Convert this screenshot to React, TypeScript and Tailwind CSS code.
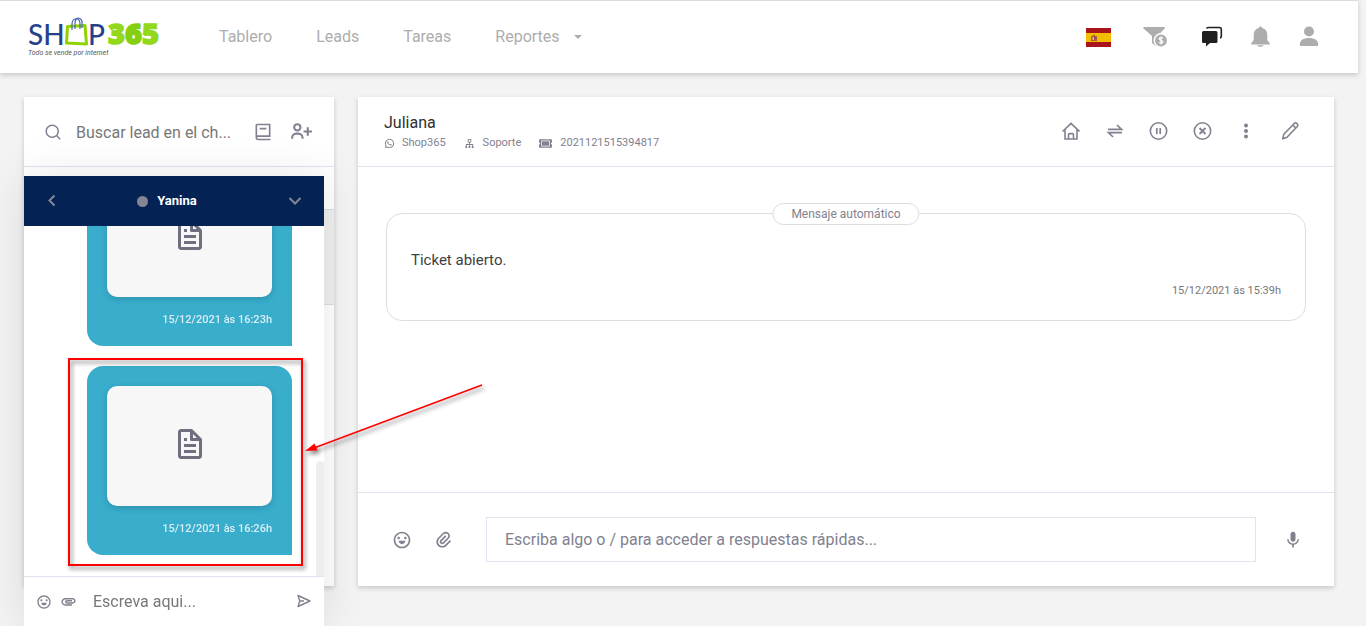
import { BiFile, BiSitemap, BiUserPlus } from "react-icons/bi";
import { FaTicketAlt } from "react-icons/fa";
import { MdAttachment, MdMic } from "react-icons/md";
import {
  RiAttachment2,
  RiBook2Line,
  RiEmotionLine,
  RiSearchLine,
  RiWhatsappLine,
} from "react-icons/ri";

const navLinks = ["Tablero", "Leads", "Tareas"];

const files = ["15/12/2021 às 16:23h", "15/12/2021 às 16:26h"];

function Logo() {
  return (
    <svg className="overflow-visible" width="134" height="42" viewBox="0 0 134 42" role="img" aria-label="Shop 365">
      <g fill="#27408b" fontFamily="Lato, sans-serif" fontWeight="500" fontSize="28">
        <text x="0" y="29">SH</text>
        <text x="60" y="29">P</text>
      </g>
      <path d="M39.500 10.500L57 9.500L58.500 28L38.500 27Z" fill="#fff" stroke="#8fd400" strokeWidth="3" strokeLinejoin="round" />
      <path d="M44 14V8C44 1 52 1 52 8V13M47 13V7C47 0 55 1 54 8V12" fill="none" stroke="#4a69b0" strokeWidth="1.200" />
      <text x="80" y="28" fill="#93d81c" stroke="#93d81c" strokeWidth="1.500" fontFamily="'Open Sans', sans-serif" fontWeight="800" fontSize="29">
        3<tspan fill="#86cf10" stroke="#86cf10">6</tspan>5
      </text>
      <text x="0" y="39" fill="#555" fontFamily="Roboto, sans-serif" fontStyle="italic" fontSize="7">
        Todo se vende por internet
      </text>
    </svg>
  );
}

function Header() {
  return (
    <header className="relative flex h-[73px] items-center border-t border-[#dcdcdc] bg-white pl-7 pr-[39px] shadow-[0_2px_5px_rgba(0,0,0,0.18)]">
      <Logo />
      <nav className="ml-[57px] flex items-center gap-11 text-base text-[#adadad]">
        {navLinks.map((link) => (
          <a key={link} href="#">{link}</a>
        ))}
        <button className="flex items-center gap-[14px]">
          Reportes
          <span className="border-x-4 border-t-4 border-x-transparent border-t-[#adadad]" />
        </button>
      </nav>

      <div className="ml-auto flex items-center text-[#adadad]">
        <button aria-label="Idioma" className="mr-8">
          <svg width="25" height="19" viewBox="0 0 25 19">
            <path fill="#aa151b" d="M0 0h25v19H0z" />
            <path fill="#f1bf00" d="M0 5h25v9H0z" />
            <path fill="#ad5a3c" d="M5 8h1.500l1.500-1.500L9.500 8H11v5H5z" />
            <path fill="#d9b7b0" d="M6.500 9h1.500v3H6.500z" />
            <path fill="#7a4a6a" d="M8 9h1.500v2H8z" />
          </svg>
        </button>
        <button aria-label="Embudo" className="mr-8">
          <svg width="26" height="22" viewBox="0 0 26 22" fill="currentColor">
            <path d="M1 1h20c.900 0 1.200 1 .600 1.600L14.500 10v9.500c0 .800-.900 1-1.500.600L9 17V10L.500 2.600C0 2 .200 1 1 1z" />
            <circle cx="18" cy="14.500" r="6.700" stroke="#fff" strokeWidth="1.500" />
            <path d="M20 12.300c-1-.900-4-.900-3.900.700.100 1.600 3.900 1.100 3.900 3 0 1.600-3 1.600-4.200.400M18 10.500v8" fill="none" stroke="#fff" strokeWidth="1.200" />
          </svg>
        </button>
        <button aria-label="Chat" className="mr-[27px] text-[#202020]">
          <svg width="22" height="22" viewBox="0 0 22 22" fill="currentColor">
            <path d="M2.500 5h12.500a1.500 1.500 0 0 1 1.500 1.500v9a1.500 1.500 0 0 1-1.500 1.500H9L5 20.500V17H2.500A1.500 1.500 0 0 1 1 15.500v-9A1.500 1.500 0 0 1 2.500 5z" />
            <path d="M5.500 2.500C6 1.500 7 1.500 8 1.500h10.500c1.400 0 1.800.500 1.800 1.800V10c0 1.200-.200 1.800-1.300 2" fill="none" stroke="currentColor" strokeWidth="1.600" />
          </svg>
        </button>
        <button aria-label="Notificaciones" className="mr-[27px]">
          <svg width="22" height="22" viewBox="0 0 22 22" fill="currentColor">
            <path d="M10.500.500c.900 0 1.500.600 1.600 1.400 3.200.700 5.200 3.300 5.200 6.600v5c0 1.200 2 2.500 2.500 4v1H1.200v-1c.500-1.500 2.500-2.800 2.500-4v-5c0-3.300 2-5.900 5.200-6.600.100-.800.700-1.400 1.600-1.400zM7.500 19.200h6c-.500 2-5.500 2-6 0z" />
          </svg>
        </button>
        <button aria-label="Perfil">
          <svg width="20" height="22" viewBox="0 0 20 22" fill="currentColor">
            <circle cx="10" cy="5.500" r="5" />
            <path d="M.800 18.500c0-4.500 4-6.500 9.200-6.500s9.200 2 9.200 6.500c0 1-.400 1.500-1.300 1.500H2.100C1.200 20 .800 19.500.800 18.500z" />
          </svg>
        </button>
      </div>
    </header>
  );
}

function Sidebar() {
  return (
    <aside className="w-[310px] shrink-0 bg-white shadow-[0_2px_5px_rgba(0,0,0,0.18)]">
      <div className="flex h-[70px] items-center border-b border-[#e2e2f0] px-5 text-[#81818f]">
        <RiSearchLine size={18} />
        <input
          aria-label="Buscar lead"
          placeholder="Buscar lead en el ch..."
          className="ml-[14px] w-0 flex-1 pt-[2px] text-base outline-none placeholder:text-[#777]"
        />
        <button aria-label="Agenda">
          <RiBook2Line size={20} />
        </button>
        <button aria-label="Agregar contacto" className="ml-4">
          <BiUserPlus size={25} />
        </button>
      </div>
      <div className="h-[43px] border-b border-[#dcdce8]" />
      <div className="h-[95px] border-b border-[#dcdce8] bg-[#f0f0f0]" />
    </aside>
  );
}

function Actions() {
  return (
    <div className="flex items-center gap-6 pb-[2px] text-[#81818f]">
      <button aria-label="Inicio">
        <svg width="20" height="20" viewBox="0 0 20 20" fill="none" stroke="currentColor" strokeWidth="1.600">
          <path d="M2.500 10.500L11 2.300l8.500 8.200M5 8.500v9.500h12V8.500M8.500 18v-4.200c0-.800.400-1.200 1.200-1.200h2.600c.800 0 1.200.400 1.200 1.200V18" />
        </svg>
      </button>
      <button aria-label="Transferir">
        <svg width="20" height="20" viewBox="0 0 20 20" fill="none" stroke="currentColor" strokeWidth="1.700">
          <path d="M4 8.300h13.500L13 4M18 11.700H4.500l4.500 4.300" />
        </svg>
      </button>
      <button aria-label="Pausar">
        <svg width="20" height="20" viewBox="0 0 20 20" fill="none" stroke="currentColor" strokeWidth="1.600">
          <circle cx="10.500" cy="10" r="8.200" />
          <path d="M8.800 7v6M12.200 7v6" strokeWidth="1.700" />
        </svg>
      </button>
      <button aria-label="Cerrar">
        <svg width="20" height="20" viewBox="0 0 20 20" fill="none" stroke="currentColor" strokeWidth="1.600">
          <circle cx="10.500" cy="10" r="8.200" />
          <path d="M7.500 7l6 6M13.500 7l-6 6" strokeWidth="1.800" />
        </svg>
      </button>
      <button aria-label="Más opciones">
        <svg width="20" height="20" viewBox="0 0 20 20" fill="currentColor">
          <circle cx="10" cy="4.500" r="2" />
          <circle cx="10" cy="10" r="2" />
          <circle cx="10" cy="15.500" r="2" />
        </svg>
      </button>
      <button aria-label="Editar">
        <svg width="20" height="20" viewBox="0 0 20 20" fill="none" stroke="currentColor" strokeWidth="1.600" strokeLinejoin="round">
          <path d="M2.800 17.800l1-4.600L14.500 2.300c1.500-1.300 4.200 1.300 3 3L7 16.200zM13 4.200l3 3" />
        </svg>
      </button>
    </div>
  );
}

function Conversation() {
  return (
    <section className="flex min-w-0 flex-1 flex-col bg-white shadow-[0_2px_5px_rgba(0,0,0,0.18)]">
      <div className="flex h-[70px] items-center justify-between border-b border-[#e2e2f0] pl-[26px] pr-[34px]">
        <div className="pt-[3px]">
          <h1 className="text-base leading-5 text-[#303030]">Juliana</h1>
          <div className="flex h-5 items-center text-[11px] text-[#81818f]">
            <RiWhatsappLine size={11} />
            <span className="ml-[7px]">Shop365</span>
            <BiSitemap size={11} className="ml-[18px]" />
            <span className="ml-2">Soporte</span>
            <FaTicketAlt size={13} className="ml-[18px]" />
            <span className="ml-2">2021121515394817</span>
          </div>
        </div>
        <Actions />
      </div>

      <div className="flex-1 px-7 pt-[46px]">
        <article className="relative flex h-[108px] flex-col rounded-2xl border border-[#dedede] px-6">
          <span className="absolute -top-[11px] left-1/2 flex h-[22px] -translate-x-1/2 items-center whitespace-nowrap rounded-full border border-[#dedede] bg-white px-[18px] text-xs text-[#81818f]">
            Mensaje automático
          </span>
          <p className="pt-9 text-[15px] leading-5 text-[#404040]">Ticket abierto.</p>
          <time className="mt-[13px] text-right text-[11px] leading-4 text-[#777]">15/12/2021 às 15:39h</time>
        </article>
      </div>

      <div className="flex h-[94px] items-center border-t border-[#e2e2f0] pl-[34px] pr-[31px] text-[#81818f]">
        <button aria-label="Emojis">
          <RiEmotionLine size={20} />
        </button>
        <button aria-label="Adjuntar" className="ml-[22px]">
          <RiAttachment2 size={20} />
        </button>
        <input
          aria-label="Mensaje"
          placeholder="Escriba algo o / para acceder a respuestas rápidas..."
          className="ml-8 mr-[27px] h-[45px] min-w-0 flex-1 border border-[#e2e2f0] px-[18px] text-base outline-none placeholder:text-[#81818f]"
        />
        <button aria-label="Grabar audio">
          <MdMic size={20} />
        </button>
      </div>
    </section>
  );
}

function ChatPopup() {
  return (
    <div className="fixed bottom-0 left-6 flex h-[450px] w-[300px] flex-col bg-white shadow-[0_0_40px_rgba(0,0,0,0.1)]">
      <div className="flex h-[50px] shrink-0 items-center justify-between bg-[#042354] px-[22px] text-[#858594]">
        <button aria-label="Volver">
          <svg width="12" height="14" viewBox="0 0 12 14" fill="none" stroke="currentColor" strokeWidth="2">
            <path d="M8.500 1.500L3.500 6.500l5 5" />
          </svg>
        </button>
        <div className="flex items-center gap-[9px] pr-3">
          <span className="size-[11px] rounded-full bg-current" />
          <strong className="text-[13px] text-white">Yanina</strong>
        </div>
        <button aria-label="Minimizar">
          <svg width="14" height="10" viewBox="0 0 14 10" fill="none" stroke="currentColor" strokeWidth="2">
            <path d="M1.500 2L7 7.500L12.500 2" />
          </svg>
        </button>
      </div>

      <div className="relative flex min-h-0 flex-1 flex-col justify-end gap-5 overflow-hidden pb-[21px] pl-[63px] pr-8">
        {files.map((date) => (
          <div key={date} className="shrink-0 rounded-2xl rounded-br-none bg-[#38adcc] p-5 pb-[18px]">
            <div className="flex h-[120px] items-center justify-center rounded-[10px] bg-[#f7f7f7] pb-1 text-[#6f6f80] shadow-[0_2px_6px_rgba(0,0,0,0.16)]">
              <BiFile size={36} />
            </div>
            <time className="mt-[15px] block text-right text-[11px] font-medium leading-4 text-[#d9eef4]">{date}</time>
          </div>
        ))}
        <span className="absolute bottom-0 right-0 h-[115px] w-2 rounded-t-full bg-[#eeeeee]" />
      </div>

      <div className="flex h-[50px] shrink-0 items-center border-t border-[#e2e2f0] px-3 text-[#81818f]">
        <button aria-label="Emojis">
          <RiEmotionLine size={16} />
        </button>
        <button aria-label="Adjuntar" className="ml-2">
          <MdAttachment size={17} />
        </button>
        <input
          aria-label="Respuesta"
          placeholder="Escreva aqui..."
          className="ml-4 min-w-0 flex-1 text-base outline-none placeholder:text-[#777]"
        />
        <button aria-label="Enviar">
          <svg width="16" height="16" viewBox="0 0 16 16" fill="none" stroke="currentColor" strokeWidth="1.400" strokeLinejoin="round">
            <path d="M2 1.500L14 7L2 12.500L3.800 7zM3.800 7H8" />
          </svg>
        </button>
      </div>

      {/* Highlight around the last file */}
      <div className="pointer-events-none absolute bottom-[60px] left-11 h-[208px] w-[235px] border-2 border-[#f00] drop-shadow-[2px_3px_2px_rgba(0,0,0,0.5)]" />
      <svg className="pointer-events-none absolute bottom-[166px] left-[280px] drop-shadow-[2px_3px_2px_rgba(0,0,0,0.5)]" width="180" height="78" viewBox="0 0 180 78">
        <path d="M178 3L10 66" stroke="#f00" strokeWidth="1.600" />
        <path d="M1 69L10.500 61.500L13.500 68.500Z" fill="#f00" />
      </svg>
    </div>
  );
}

function App() {
  return (
    <div className="min-h-screen bg-[#f3f3f3] pr-2 font-['Roboto',sans-serif]">
      <Header />
      <main className="box-content flex h-[calc(100vh-137px)] min-h-[400px] gap-6 px-6 pt-6">
        <Sidebar />
        <Conversation />
      </main>
      <ChatPopup />
    </div>
  );
}

export default App;
